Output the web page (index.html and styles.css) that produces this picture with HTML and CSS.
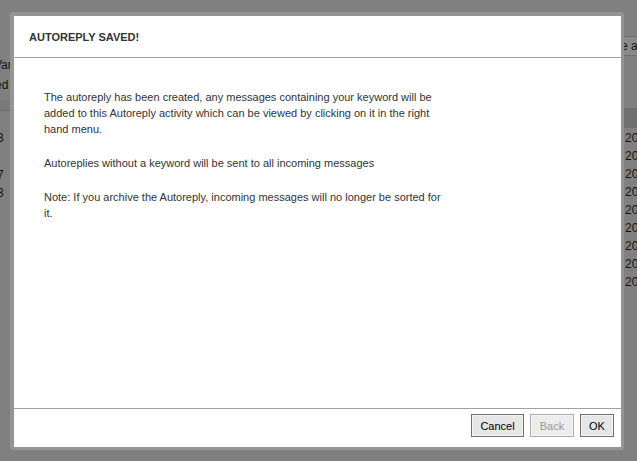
FILE: index.html
```html
<!DOCTYPE html>
<html>
<head>
<meta charset="utf-8">
<link rel="stylesheet" href="styles.css">
</head>
<body>
<div class="page">
  <div class="left-col">
    <div class="lt lt-var">Var</div>
    <div class="lt lt-ed">ed</div>
    <div class="band"></div>
    <div class="lt lt-n1">3</div>
    <div class="lt lt-n2">7</div>
    <div class="lt lt-n3">3</div>
  </div>
  <div class="right-col">
    <div class="r-btn">e a</div>
    <div class="r-band"></div>
    <div class="r-rows">
      <div>20</div><div>20</div><div>20</div><div>20</div><div>20</div><div>20</div><div>20</div><div>20</div><div>20</div>
    </div>
  </div>
</div>
<div class="dialog">
  <div class="inner">
    <div class="header">AUTOREPLY SAVED!</div>
    <div class="body">
      <p>The autoreply has been created, any messages containing your keyword will be added to this Autoreply activity which can be viewed by clicking on it in the right hand menu.</p>
      <p>Autoreplies without a keyword will be sent to all incoming messages</p>
      <p>Note: If you archive the Autoreply, incoming messages will no longer be sorted for it.</p>
    </div>
    <div class="footer">
      <button class="btn btn-cancel">Cancel</button>
      <button class="btn btn-back btn-disabled">Back</button>
      <button class="btn btn-ok">OK</button>
    </div>
  </div>
</div>
</body>
</html>
```
FILE: styles.css
```css
html, body {
  margin: 0;
  padding: 0;
}
body {
  width: 637px;
  height: 461px;
  overflow: hidden;
  background: #808080;
  position: relative;
  font-family: "Liberation Sans", Arial, sans-serif;
}
.page {
  display: flex;
  justify-content: space-between;
  height: 461px;
}
.left-col {
  width: 10px;
  overflow: hidden;
  display: flex;
  flex-direction: column;
  font-size: 12px;
  color: #141414;
}
.lt {
  height: 16px;
  line-height: 16px;
  white-space: nowrap;
}
.lt-var {
  margin-top: 57px;
  margin-left: -6px;
}
.lt-ed {
  margin-top: 4px;
  margin-left: -5px;
}
.band {
  margin-top: 7px;
  height: 10px;
  background: #7a7a7a;
  border-bottom: 1px solid #6a6a6a;
}
.lt-n1 {
  margin-top: 19px;
  margin-left: -3px;
}
.lt-n2 {
  margin-top: 21px;
  margin-left: -3px;
}
.lt-n3 {
  margin-top: 2px;
  margin-left: -3px;
}
.right-col {
  width: 13px;
  overflow: hidden;
  display: flex;
  flex-direction: column;
  font-size: 12px;
  color: #141414;
}
.r-btn {
  margin-top: 36px;
  height: 18px;
  line-height: 18px;
  background: #8a8a8a;
  border-top: 1px solid #6f6f6f;
  border-bottom: 1px solid #6f6f6f;
  white-space: nowrap;
  margin-left: -3px;
}
.r-band {
  margin-top: 52px;
  height: 20px;
  background: #6f6f6f;
}
.r-rows {
  margin-top: 1px;
  padding-left: 1px;
}
.r-rows div {
  height: 18px;
  line-height: 18px;
}
.dialog {
  position: absolute;
  left: 10px;
  top: 12px;
  width: 614px;
  height: 438px;
  box-sizing: border-box;
  padding: 4px 3px 3px 4px;
  background: #959595;
  border-radius: 3px;
}
.inner {
  background: #fff;
  height: 100%;
  display: flex;
  flex-direction: column;
}
.header {
  height: 41px;
  flex: none;
  border-bottom: 1px solid #a0a0a0;
  display: flex;
  align-items: center;
  padding-left: 15px;
  font-size: 11px;
  font-weight: bold;
  color: #333;
}
.body {
  flex: 1;
  padding: 31px 0 0 30px;
  font-size: 11px;
  line-height: 16px;
  color: #333;
}
.body p {
  margin: 0 0 18px 0;
  width: 402px;
}
.footer {
  flex: none;
  border-top: 1px solid #a0a0a0;
  height: 33px;
  display: flex;
  justify-content: flex-end;
  align-items: flex-start;
  gap: 6px;
  padding: 5px 7px 0 0;
}
.btn {
  height: 23px;
  padding: 0;
  font-family: "Liberation Sans", Arial, sans-serif;
  font-size: 11px;
  color: #000;
  background: #e6e6e6;
  border: 1px solid #707070;
  box-shadow: inset 0 0 0 1px #f4f4f4;
  border-radius: 0;
}
.btn-cancel {
  width: 53px;
}
.btn-back {
  width: 44px;
}
.btn-ok {
  width: 34px;
}
.btn-disabled {
  color: #999;
  border-color: #adadad;
  background: #ececec;
}
```
